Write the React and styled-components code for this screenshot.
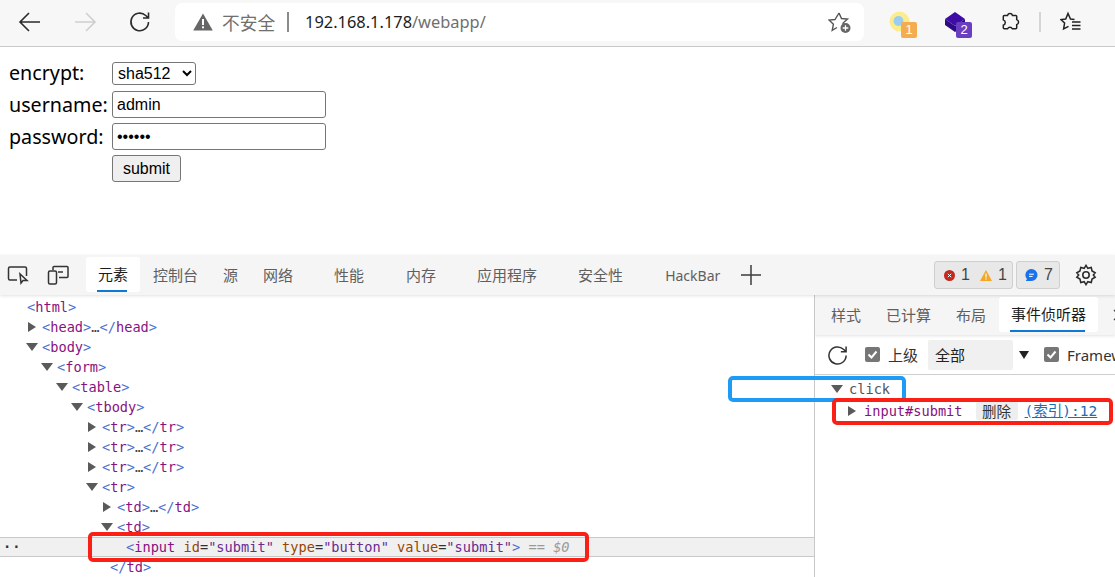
import React from "react";
import styled, { createGlobalStyle } from "styled-components";

const cjk = `"Noto Sans", "Noto Sans CJK SC", sans-serif`;
const mono = `"DejaVu Sans Mono", monospace`;

const GlobalStyle = createGlobalStyle`
  html, body {
    margin: 0;
    height: 577px;
    overflow: hidden;
    background: #fff;
  }
  * {
    box-sizing: border-box;
  }
`;

const Screen = styled.div`
  position: relative;
  width: 1115px;
  height: 577px;
  display: flex;
  flex-direction: column;
  overflow: hidden;
  font-family: ${cjk};
`;

/* browser chrome */
const Toolbar = styled.header`
  height: 47px;
  flex: none;
  display: flex;
  align-items: center;
  background: #f7f7f7;
  border-bottom: 1px solid #c9c9c9;
  padding: 0 0 3px 0;
`;

const NavButton = styled.div`
  width: 55px;
  height: 24px;
  flex: none;
  display: flex;
  align-items: center;
  justify-content: center;
  color: ${(p) => (p.$disabled ? "#cfcfcf" : "#2b2b2b")};
`;

const NavGroup = styled.div`
  display: flex;
  align-items: center;
  padding-left: 2px;
  width: 175px;
  flex: none;
`;

const AddressBar = styled.div`
  width: 689px;
  height: 38px;
  flex: none;
  display: flex;
  align-items: center;
  padding: 0 12px 0 18px;
  background: #fff;
  border-radius: 7px;
`;

const Insecure = styled.span`
  margin-left: 9px;
  font-size: 17.7px;
  color: #6f6f6f;
`;

const Divider = styled.span`
  width: 2px;
  height: 20px;
  margin: 0 16px 0 12px;
  background: #8a8a8a;
`;

const Host = styled.span`
  font-size: 16.4px;
  color: #1c1c1c;
`;

const Path = styled.span`
  font-size: 16.4px;
  color: #6f6f6f;
`;

const AddressEnd = styled.div`
  margin-left: auto;
  display: flex;
`;

const ExtensionArea = styled.div`
  flex: 1;
  display: flex;
  align-items: center;
  height: 38px;
  padding-left: 25px;
`;

const Extension = styled.div`
  position: relative;
  width: ${(p) => p.$w}px;
  height: 30px;
  flex: none;
  display: flex;
  align-items: center;
`;

const CountBadge = styled.span`
  position: absolute;
  left: 12px;
  top: 15px;
  width: 16px;
  height: 16px;
  border-radius: 2px;
  background: ${(p) => p.$bg};
  color: #fff;
  font: 13px/16px "Liberation Sans", sans-serif;
  text-align: center;
`;

const ToolSeparator = styled.span`
  width: 2px;
  height: 20px;
  flex: none;
  margin: 0 19px;
  background: #d6d6d6;
`;

/* page content */
const Page = styled.main`
  height: 208px;
  flex: none;
  padding: 12px 0 0 9px;
`;

const LoginForm = styled.form`
  display: grid;
  grid-template-columns: 103px max-content;
  grid-auto-rows: 27px;
  row-gap: 5px;
  align-items: center;
  justify-items: start;
`;

const Label = styled.label`
  font-size: 19.7px;
  line-height: 27px;
  color: #000;
`;

const Select = styled.select`
  width: 84px;
  height: 23px;
  margin-top: 2px;
  padding: 0 0 0 1px;
  font: 16px "Liberation Sans", sans-serif;
  border: 1px solid #767676;
  border-radius: 3px;
  background: #fff;
  color: #000;
`;

const TextInput = styled.input`
  width: 214px;
  height: 27px;
  padding: 0 4px;
  font: 16px "Liberation Sans", sans-serif;
  color: #000;
  background: #fff;
  border: 1px solid #767676;
  border-radius: 3px;
`;

const SubmitButton = styled.input`
  width: 69px;
  height: 27px;
  padding: 0;
  font: 16px "Liberation Sans", sans-serif;
  color: #000;
  background: #efefef;
  border: 1px solid #767676;
  border-radius: 3px;
`;

/* devtools */
const Devtools = styled.section`
  flex: 1;
  min-height: 0;
  display: flex;
  flex-direction: column;
`;

const TabBar = styled.div`
  height: 40px;
  flex: none;
  display: flex;
  align-items: center;
  background: #f5f5f5;
  box-shadow: 0 1px 3px rgba(0, 0, 0, 0.12);
  position: relative;
`;

const DeviceIcons = styled.div`
  width: 86px;
  flex: none;
  display: flex;
  align-items: center;
  gap: 18px;
  padding-left: 7px;
`;

const Tab = styled.div`
  position: relative;
  height: ${(p) => (p.$active ? "35px" : "auto")};
  margin-top: ${(p) => (p.$active ? "-1px" : "0")};
  margin-left: ${(p) => p.$gap || 0}px;
  padding: 0 ${(p) => (p.$active ? "12px" : "0")};
  flex: none;
  font-size: 15px;
  line-height: 35px;
  color: ${(p) => (p.$active ? "#1c1c1c" : "#5f5f5f")};
  background: ${(p) => (p.$active ? "#fff" : "transparent")};
  border-radius: 3px;
  &::after {
    content: "";
    display: ${(p) => (p.$active ? "block" : "none")};
    position: absolute;
    left: 11px;
    right: 13px;
    bottom: 0;
    height: 2px;
    background: #0f78d4;
  }
`;

const LatinTab = styled(Tab)`
  font-size: 14px;
`;

const TabPlus = styled.div`
  margin-left: 21px;
  display: flex;
  color: #3d3d3d;
`;

const MoreTabs = styled.div`
  flex: none;
  margin-left: 15px;
  display: flex;
  color: #444;
`;

const StatusArea = styled.div`
  margin-left: auto;
  display: flex;
  align-items: center;
  padding-right: 18px;
`;

const StatusPill = styled.div`
  width: ${(p) => p.$w}px;
  height: 28px;
  margin-left: 3px;
  display: flex;
  align-items: center;
  gap: 6px;
  padding-left: ${(p) => p.$pad}px;
  background: #e8e8e8;
  border: 1px solid #cfcfcf;
  border-radius: 3px;
  font: 16px "Liberation Sans", sans-serif;
  color: #444;
`;

const WarnIcon = styled.svg`
  margin-left: 4px;
`;

const Gear = styled.div`
  margin-left: 15px;
  display: flex;
  color: #2c2c2c;
`;

const Panes = styled.div`
  flex: 1;
  min-height: 0;
  display: flex;
`;

const Tree = styled.div`
  width: 815px;
  flex: none;
  padding-top: 2px;
  border-right: 1px solid #c8c8c8;
  overflow: hidden;
`;

const TreeRow = styled.div`
  position: relative;
  height: 20px;
  display: flex;
  align-items: center;
  padding-left: ${(p) => p.$indent}px;
  font: 13.65px/20px ${mono};
  white-space: pre;
  color: #333;
  background: ${(p) => (p.$selected ? "#f0f0f0" : "transparent")};
  box-shadow: ${(p) => (p.$selected ? "inset 0 1px 0 #c9c9c9, inset 0 -1px 0 #c9c9c9" : "none")};
`;

const Caret = styled.span`
  width: 15px;
  flex: none;
  display: flex;
  align-items: center;
  justify-content: center;
  padding-right: 5px;
  &::before {
    content: "";
    display: block;
    flex: none;
    border-style: solid;
    border-color: transparent;
    ${(p) =>
      p.$open
        ? "border-width: 8px 6px 0 6px; border-top-color: #5a5a5a;"
        : "border-width: 5.5px 0 5.5px 8px; border-left-color: #5a5a5a;"}
  }
`;

const Bracket = styled.span`
  color: #4a6fd0;
`;
const TagName = styled.span`
  color: #881280;
`;
const AttrName = styled.span`
  color: #994500;
`;
const AttrValue = styled.span`
  color: #6b2c8f;
`;
const Console = styled.span`
  color: #9a9a9a;
  font-style: italic;
`;
const Plain = styled.span`
  color: #444;
`;

const Dots = styled.span`
  position: absolute;
  left: 3px;
  top: 0;
  font-weight: bold;
  letter-spacing: 1px;
  color: #333;
`;

const Side = styled.aside`
  flex: 1;
  min-width: 0;
  display: flex;
  flex-direction: column;
  overflow: hidden;
`;

const SideTabs = styled.div`
  height: 40px;
  flex: none;
  display: flex;
  align-items: center;
  padding-left: 16px;
  background: #f5f5f5;
  box-shadow: 0 1px 3px rgba(0, 0, 0, 0.12);
  white-space: nowrap;
`;

const SideToolbar = styled.div`
  height: 40px;
  flex: none;
  display: flex;
  align-items: center;
  padding-left: 13px;
  border-bottom: 1px solid #cfcfcf;
  white-space: nowrap;
  color: #333;
`;

const RefreshIcon = styled.svg`
  flex: none;
`;

const CheckBox = styled.span`
  width: 15px;
  height: 15px;
  flex: none;
  display: flex;
  align-items: center;
  justify-content: center;
  margin-left: ${(p) => p.$ml}px;
  background: #767676;
  border-radius: 2px;
`;

const ToolLabel = styled.span`
  flex: none;
  margin-left: 8px;
  font-size: 15px;
  color: #333;
`;

const Filter = styled.div`
  width: 85px;
  height: 30px;
  flex: none;
  margin-left: 10px;
  padding-left: 7px;
  font-size: 15px;
  line-height: 30px;
  color: #222;
  background: #f0f0f0;
  border-radius: 2px;
`;

const FilterArrow = styled.span`
  flex: none;
  margin-left: 6px;
  border-style: solid;
  border-color: #222 transparent transparent;
  border-width: 8px 5.5px 0;
`;

const EventRow = styled.div`
  height: ${(p) => p.$h}px;
  flex: none;
  display: flex;
  align-items: center;
  padding-left: ${(p) => p.$indent}px;
  font: 13.65px/20px ${mono};
  color: #555;
  white-space: nowrap;
`;

const EventCaret = styled(Caret)`
  width: 17px;
  padding-right: 7px;
`;

const RemoveButton = styled.span`
  width: 42px;
  height: 18px;
  flex: none;
  margin-left: 13px;
  text-align: center;
  font: 14.5px/18px ${cjk};
  color: #333;
  background: #eee;
  border-radius: 2px;
`;

const SourceLink = styled.span`
  margin-left: 7px;
  font: 14.5px/18px "DejaVu Sans Mono", "Noto Sans CJK SC", monospace;
  color: #1a6fb5;
  text-decoration: underline;
`;

/* markup drawn over the screenshot */
const Annotation = styled.div`
  position: absolute;
  left: ${(p) => p.$x}px;
  top: ${(p) => p.$y}px;
  width: ${(p) => p.$w}px;
  height: ${(p) => p.$h}px;
  border: 4px solid ${(p) => p.$color};
  border-radius: 5px;
  pointer-events: none;
`;

const Svg = ({ size = 24, children, ...rest }) => (
  <svg width={size} height={size} viewBox="0 0 24 24" fill="none" stroke="currentColor" strokeWidth="1.6" {...rest}>
    {children}
  </svg>
);

const Tag = ({ name, close, after }) => (
  <span>
    <Bracket>{close ? "</" : "<"}</Bracket>
    <TagName>{name}</TagName>
    <Bracket>{">"}</Bracket>
    {after}
  </span>
);

const Collapsed = ({ name }) => (
  <span>
    <Tag name={name} />
    <Plain>…</Plain>
    <Tag name={name} close />
  </span>
);

const rows = [
  { indent: 27, tag: "html" },
  { indent: 27, caret: "closed", collapsed: "head" },
  { indent: 27, caret: "open", tag: "body" },
  { indent: 42, caret: "open", tag: "form" },
  { indent: 57, caret: "open", tag: "table" },
  { indent: 72, caret: "open", tag: "tbody" },
  { indent: 87, caret: "closed", collapsed: "tr" },
  { indent: 87, caret: "closed", collapsed: "tr" },
  { indent: 87, caret: "closed", collapsed: "tr" },
  { indent: 87, caret: "open", tag: "tr" },
  { indent: 102, caret: "closed", collapsed: "td" },
  { indent: 102, caret: "open", tag: "td" },
];

const CheckMark = () => (
  <svg width="11" height="11" viewBox="0 0 11 11" fill="none" stroke="#fff" strokeWidth="2">
    <path d="M1.5 5.5 L4.5 8.5 L9.5 2.5" />
  </svg>
);

export default function App() {
  return (
    <Screen>
      <GlobalStyle />
      <Toolbar>
        <NavGroup>
          <NavButton>
            <Svg>
              <path d="M22 12H2M11 3l-9 9 9 9" />
            </Svg>
          </NavButton>
          <NavButton $disabled>
            <Svg>
              <path d="M2 12h20M13 3l9 9-9 9" />
            </Svg>
          </NavButton>
          <NavButton>
            <Svg>
              <path d="M20.5 12a8.8 8.8 0 1 1-2.8-6.5L20.5 8M20.5 2.5V8H15" />
            </Svg>
          </NavButton>
        </NavGroup>
        <AddressBar>
          <svg width="20" height="18" viewBox="0 0 20 18">
            <path d="M10 0.5 L19.8 17.5 H0.2 Z" fill="#666" />
            <rect x="9" y="6" width="2" height="6" fill="#fff" />
            <rect x="9" y="13.3" width="2" height="2" fill="#fff" />
          </svg>
          <Insecure>不安全</Insecure>
          <Divider />
          <Host>192.168.1.178</Host>
          <Path>/webapp/</Path>
          <AddressEnd>
            <svg width="24" height="24" viewBox="0 0 24 24" fill="none" stroke="#555" strokeWidth="1.4">
              <path d="M11 3l2.5 5.5 6 .6-4.5 4 1 3M9 17.5l-4.8 2.8 1.2-6-4.4-4.2 6-.6L11 3" />
              <circle cx="17.5" cy="18" r="5" fill="#666" stroke="none" />
              <path d="M17.5 15.2v5.6M14.7 18h5.6" stroke="#fff" strokeWidth="1.3" />
            </svg>
          </AddressEnd>
        </AddressBar>
        <ExtensionArea>
          <Extension $w={55}>
            <svg width="21" height="21" viewBox="0 0 21 21">
              <circle cx="10.5" cy="10.5" r="10" fill="#fdec8b" />
              <circle cx="9.5" cy="10" r="5" fill="#9bcdf0" />
            </svg>
            <CountBadge $bg="#f4ad4e">1</CountBadge>
          </Extension>
          <Extension $w={56}>
            <svg width="22" height="22" viewBox="0 0 22 22">
              <path d="M1 8 L11 15 L21 8 V14 L11 21 L1 14 Z" fill="#2f0a85" />
              <path d="M11 1 L21 8 L11 15 L1 8 Z" fill="#3f0ca6" />
            </svg>
            <CountBadge $bg="#6a3ec0">2</CountBadge>
          </Extension>
          <Extension $w={20}>
            <svg width="20" height="20" viewBox="0 0 20 20" fill="none" stroke="#222" strokeWidth="1.5">
              <path d="M7.5 3.5a2.6 2.6 0 0 1 5 0h3.2a1 1 0 0 1 1 1v3.1a2.6 2.6 0 0 1 0 5v3.2a1 1 0 0 1-1 1h-3.4a2.6 2.6 0 0 0-4.7 0H4.3a1 1 0 0 1-1-1v-2.7a2.7 2.7 0 0 0 0-5.2V4.5a1 1 0 0 1 1-1z" />
            </svg>
          </Extension>
          <ToolSeparator />
          <Extension $w={22}>
            <svg width="22" height="22" viewBox="0 0 22 22" fill="none" stroke="#222" strokeWidth="1.5">
              <path d="M14.5 8.5 L10.5 8 L8 2.5 L5.7 8 L1 8.6 L4.6 12 L3.6 18 L8.5 15.4" />
              <path d="M12 11h8.5M12 14.5h8.5M12 18h8.5" />
            </svg>
          </Extension>
        </ExtensionArea>
      </Toolbar>

      <Page>
        <LoginForm>
          <Label>encrypt:</Label>
          <Select defaultValue="sha512">
            <option>sha512</option>
          </Select>
          <Label>username:</Label>
          <TextInput type="text" defaultValue="admin" />
          <Label>password:</Label>
          <TextInput type="password" defaultValue="123456" />
          <span />
          <SubmitButton type="button" value="submit" />
        </LoginForm>
      </Page>

      <Devtools>
        <TabBar>
          <DeviceIcons>
            <svg width="22" height="20" viewBox="0 0 22 20" fill="none" stroke="#333" strokeWidth="1.5">
              <path d="M10 15H3a1.5 1.5 0 0 1-1.5-1.5v-10A1.5 1.5 0 0 1 3 2h15a1.5 1.5 0 0 1 1.5 1.5V11" />
              <path d="M13 9 L14 18 L16 15.5 L20 15.5 Z" />
            </svg>
            <svg width="22" height="20" viewBox="0 0 22 20" fill="none" stroke="#333" strokeWidth="1.5">
              <path d="M6 5V2.5A1 1 0 0 1 7 1.5h13a1 1 0 0 1 1 1v9a1 1 0 0 1-1 1h-8" />
              <rect x="1.5" y="6" width="8" height="13" rx="1.5" />
              <path d="M11 7h5" />
            </svg>
          </DeviceIcons>
          <Tab $active>元素</Tab>
          <Tab $gap={13}>控制台</Tab>
          <Tab $gap={25}>源</Tab>
          <Tab $gap={25}>网络</Tab>
          <Tab $gap={41}>性能</Tab>
          <Tab $gap={42}>内存</Tab>
          <Tab $gap={41}>应用程序</Tab>
          <Tab $gap={41}>安全性</Tab>
          <LatinTab $gap={42}>HackBar</LatinTab>
          <TabPlus>
            <svg width="20" height="20" viewBox="0 0 20 20" stroke="currentColor" strokeWidth="1.5">
              <path d="M10 0v20M0 10h20" />
            </svg>
          </TabPlus>
          <StatusArea>
            <StatusPill $w={79} $pad={9}>
              <svg width="11" height="11" viewBox="0 0 11 11">
                <circle cx="5.5" cy="5.5" r="5.5" fill="#c5281c" />
                <path d="M3.8 3.8l3.4 3.4M7.2 3.8l-3.4 3.4" stroke="#fff" strokeWidth="1" />
              </svg>
              1
              <WarnIcon width="12" height="11" viewBox="0 0 12 11">
                <path d="M6 0 L12 11 H0 Z" fill="#f5a623" />
                <rect x="5.4" y="3.5" width="1.2" height="4" fill="#fff" />
                <rect x="5.4" y="8.3" width="1.2" height="1.2" fill="#fff" />
              </WarnIcon>
              1
            </StatusPill>
            <StatusPill $w={44} $pad={8}>
              <svg width="13" height="13" viewBox="0 0 13 13">
                <path d="M6.5 0a6 6 0 0 1 0 12H0.8l1.2-2A6 6 0 0 1 6.5 0z" fill="#1a73e8" />
                <path d="M4 5.2h5M4 7.4h3.6" stroke="#fff" strokeWidth="1" />
              </svg>
              7
            </StatusPill>
            <Gear>
              <svg width="22" height="22" viewBox="0 0 24 24" fill="none" stroke="currentColor" strokeWidth="1.7">
                <circle cx="12" cy="12" r="3.5" />
                <path d="M12 1.5l2 3.2 3.7-.9.9 3.7 3.4 2L20 12l2 2.5-3.4 2-.9 3.7-3.7-.9-2 3.2-2-3.2-3.7.9-.9-3.7-3.4-2L4 12 2 9.5l3.4-2 .9-3.7 3.7.9z" />
              </svg>
            </Gear>
          </StatusArea>
        </TabBar>

        <Panes>
          <Tree>
            {rows.map((r, i) => (
              <TreeRow key={i} $indent={r.indent}>
                {r.caret && <Caret $open={r.caret === "open"} />}
                {r.collapsed ? <Collapsed name={r.collapsed} /> : <Tag name={r.tag} />}
              </TreeRow>
            ))}
            <TreeRow $indent={126} $selected>
              <Dots>··</Dots>
              <span>
                <Bracket>{"<"}</Bracket>
                <TagName>input</TagName> <AttrName>id</AttrName>=<AttrValue>"submit"</AttrValue>{" "}
                <AttrName>type</AttrName>=<AttrValue>"button"</AttrValue> <AttrName>value</AttrName>=
                <AttrValue>"submit"</AttrValue>
                <Bracket>{">"}</Bracket>
                <Console> == $0</Console>
              </span>
            </TreeRow>
            <TreeRow $indent={110}>
              <Tag name="td" close />
            </TreeRow>
          </Tree>

          <Side>
            <SideTabs>
              <Tab>样式</Tab>
              <Tab $gap={25}>已计算</Tab>
              <Tab $gap={25}>布局</Tab>
              <Tab $active $gap={13}>
                事件侦听器
              </Tab>
              <MoreTabs>
                <svg width="12" height="12" viewBox="0 0 12 12" fill="none" stroke="currentColor" strokeWidth="1.3">
                  <path d="M1 1l5 5-5 5M6 1l5 5-5 5" />
                </svg>
              </MoreTabs>
            </SideTabs>
            <SideToolbar>
              <RefreshIcon width="20" height="20" viewBox="2 1 21 21" fill="none" stroke="currentColor" strokeWidth="1.6">
                <path d="M21 12a9 9 0 1 1-2.8-6.5L21 8M21 2.5V8h-5.5" />
              </RefreshIcon>
              <CheckBox $ml={17}>
                <CheckMark />
              </CheckBox>
              <ToolLabel>上级</ToolLabel>
              <Filter>全部</Filter>
              <FilterArrow />
              <CheckBox $ml={15}>
                <CheckMark />
              </CheckBox>
              <ToolLabel>Framework listeners</ToolLabel>
            </SideToolbar>
            <EventRow $h={27} $indent={17}>
              <EventCaret $open />
              click
            </EventRow>
            <EventRow $h={18} $indent={32}>
              <EventCaret />
              <TagName>input#submit</TagName>
              <RemoveButton>删除</RemoveButton>
              <SourceLink>(索引):12</SourceLink>
            </EventRow>
          </Side>
        </Panes>
      </Devtools>

      <Annotation $x={728} $y={376} $w={178} $h={26} $color="#1e9bf5" />
      <Annotation $x={832} $y={398} $w={281} $h={27} $color="#fb2016" />
      <Annotation $x={88} $y={532} $w={501} $h={30} $color="#fb2016" />
    </Screen>
  );
}
